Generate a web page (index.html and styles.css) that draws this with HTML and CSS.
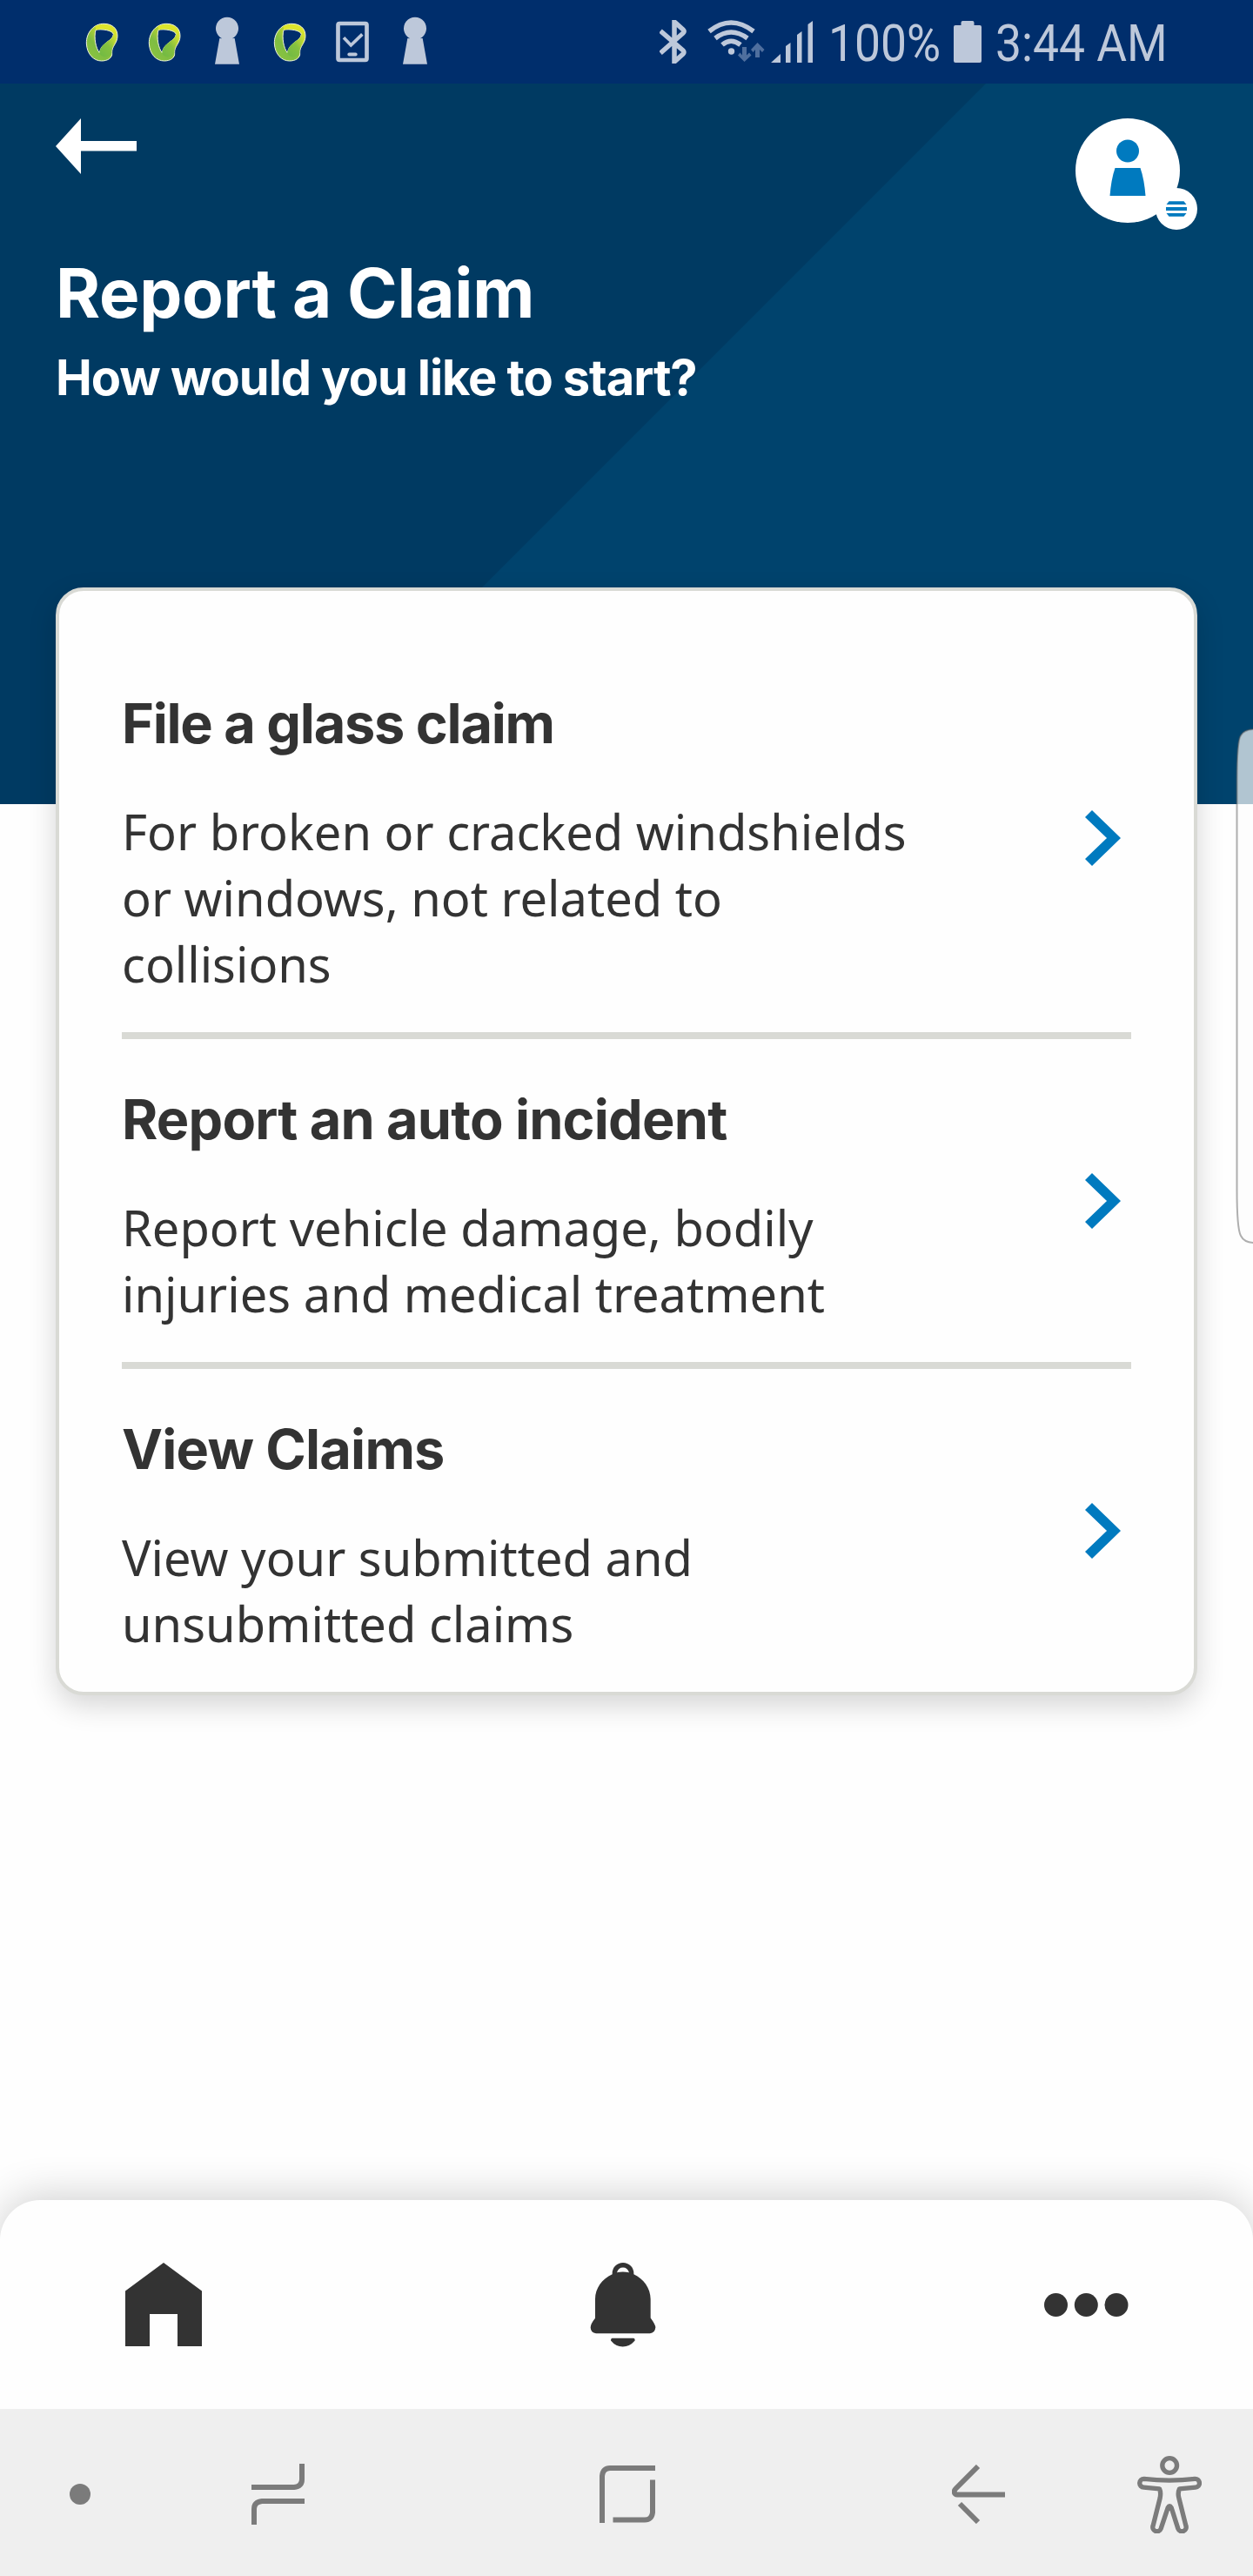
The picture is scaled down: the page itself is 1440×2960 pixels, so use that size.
FILE: index.html
```html
<!DOCTYPE html>
<html lang="en">
<head>
<meta charset="utf-8">
<title>Report a Claim</title>
<link rel="stylesheet" href="styles.css">
</head>
<body>
<svg class="defs" width="0" height="0" aria-hidden="true">
  <defs>
    <linearGradient id="lime" x1="0" y1="1" x2="1" y2="0">
      <stop offset="0" stop-color="#8fc63f"/><stop offset=".35" stop-color="#7fbd42"/><stop offset=".6" stop-color="#b9d432"/><stop offset="1" stop-color="#e9ec2c"/>
    </linearGradient>
    <linearGradient id="leaf" x1="0" y1="1" x2="1" y2="0">
      <stop offset="0" stop-color="#6fb944"/><stop offset=".5" stop-color="#86c13f"/><stop offset="1" stop-color="#dfe62f"/>
    </linearGradient>
    <symbol id="swirl" viewBox="3 0 216 288">
      <path d="M120 82C84 80 57 112 58 150C60 188 84 210 110 210C131 210 148 200 146 182C144 160 165 150 165 124C165 96 145 83 120 82ZM90 103C110 99 148 104 151 118C150 142 108 146 103 182C90 166 83 130 90 103Z" fill="url(#lime)" fill-rule="evenodd" stroke="#f1f5dd" stroke-width="3"/>
      <path d="M163 122C160 142 144 158 145 184C142 200 112 202 103 184C106 146 145 145 152 118Z" fill="url(#leaf)"/>
      <path d="M88 90C110 82 140 82 154 98L150 106C130 98 108 98 92 104Z" fill="#dde52c"/>
    </symbol>
    <symbol id="keyhole" viewBox="435 0 216 288">
      <path d="M526 133A39 39 0 1 1 560 133Q561 131 569 132L585 221H501L517 132Z" fill="#bdc8da"/>
    </symbol>
    <symbol id="chevron" viewBox="0 0 41 64">
      <path d="M8 0L41 32L8 64L0 56L25 32L0 8Z" fill="#007abf"/>
    </symbol>
  </defs>
</svg>

<div class="status">
  <div class="notes">
    <svg><use href="#swirl"/></svg>
    <svg><use href="#swirl"/></svg>
    <svg><use href="#keyhole"/></svg>
    <svg><use href="#swirl"/></svg>
    <svg viewBox="867 0 216 288"><g fill="none" stroke="#bdc8da"><rect x="925.500" y="81" width="99" height="126" rx="5" stroke-width="14"/><path d="M945 130L970 156L1009 118" stroke-width="11"/><path d="M964 187.500H986" stroke-width="12" stroke-linecap="round"/></g></svg>
    <svg><use href="#keyhole"/></svg>
  </div>
  <div class="system">
    <svg class="bt" viewBox="0 0 32 50"><path d="M1 12.500L27 35Q29 37 27 39L17 48V2L27 11Q29 13 27 15L1 38" fill="none" stroke="#bdc8da" stroke-width="5.500"/></svg>
    <svg class="wifi" viewBox="0 0 66 50"><g fill="none" stroke="#bdc8da" stroke-width="5.500"><path d="M2 13Q27 -7 53 13"/><path d="M9 21Q27 7 46 21"/><path d="M17 28.500Q27 20 38 28.500"/></g><circle cx="27.500" cy="36" r="3.700" fill="#bdc8da"/><g fill="#4f6f9e"><path d="M40 31h5v9.500l3-3 2.500 3L42.500 48l-7.500-7.500 2.500-3 2.500 3z"/><path d="M55 43h5v-9l3 3 2.500-3L57.500 26l-7.500 8 2.500 3 2.500-3z"/></g></svg>
    <svg class="signal" viewBox="0 0 48 48"><path d="M0 48L11 38V48ZM17 48V29L22.500 25V48ZM30 48V16L35.500 12V48ZM42.500 48V4L48 0V48Z" fill="#bdc8da"/></svg>
    <span class="pct"><span class="cond">100%</span></span>
    <svg class="battery" viewBox="0 0 32 48"><path d="M8.500 2q0-2 2-2h11q2 0 2 2v3h6.500q2 0 2 2v39q0 2-2 2H2q-2 0-2-2V7q0-2 2-2h6.500z" fill="#bdc8da"/></svg>
    <span class="time"><span class="cond">3:44 AM</span></span>
  </div>
</div>

<header class="hero">
  <div class="bar">
    <svg class="back" viewBox="0 0 93 64"><path d="M0 32L29 0V26H93V37.500H29V64Z" fill="#fff"/></svg>
    <svg class="profile" viewBox="0 0 140 128"><circle cx="60" cy="60" r="60" fill="#fff"/><circle cx="60" cy="37.500" r="13" fill="#007abf"/><path d="M45.500 57H74.500Q79 70 80.500 89H39.500Q41 70 45.500 57Z" fill="#007abf"/><circle cx="116" cy="104" r="24" fill="#fff"/><path d="M107.500 95.300h17l3 3.700h-23zM104 102h24v4h-24zM104.500 109h23l-3 3.700h-17z" fill="#007abf"/></svg>
  </div>
  <h1>Report a Claim</h1>
  <p class="sub">How would you like to start?</p>
</header>

<main class="card">
  <section class="row">
    <div class="copy"><h2 class="tight">File a glass claim</h2><p>For broken or cracked windshields or windows, not related to collisions</p></div>
    <svg class="chev"><use href="#chevron"/></svg>
  </section>
  <section class="row">
    <div class="copy"><h2>Report an auto incident</h2><p>Report vehicle damage, bodily injuries and medical treatment</p></div>
    <svg class="chev"><use href="#chevron"/></svg>
  </section>
  <section class="row">
    <div class="copy"><h2>View Claims</h2><p>View your submitted and unsubmitted claims</p></div>
    <svg class="chev"><use href="#chevron"/></svg>
  </section>
</main>

<svg class="edge" viewBox="0 0 20 592"><path d="M22 1Q10 1 6 8Q1.500 14 1.500 60V530Q1.500 575 6 583Q10 591 22 591Z" fill="rgba(252,252,252,.7)" stroke="rgba(90,90,90,.48)" stroke-width="2"/></svg>

<div class="bottom">
  <nav class="tabs">
    <svg class="home" viewBox="0 0 88 96"><path d="M44 0L88 32.500V96H60V59H28V96H0V32.500Z" fill="#333"/></svg>
    <svg class="bell" viewBox="235 299 228 290"><path d="M312 338V335A36.500 36 0 0 1 386 335V338C420 354 444 386 444 424V489Q461 512 461 522Q459 541 442 542H256Q238 540 237 522Q237 510 253 490V424C253 386 277 354 312 338ZM328 332Q348 328 370 332Q364 315 349 315Q333 315 328 332Z" fill="#333" fill-rule="evenodd"/><path d="M311 559H386Q391 561 390 567Q372 588 348 588Q324 588 307 567Q306 561 311 559Z" fill="#333"/></svg>
    <svg class="more" viewBox="0 0 97 27"><g fill="#333"><circle cx="13.500" cy="13.500" r="13.500"/><circle cx="48.300" cy="13.500" r="13.500"/><circle cx="83" cy="13.500" r="13.500"/></g></svg>
  </nav>
  <nav class="keys">
    <svg class="k-dot" viewBox="0 0 24 24"><circle cx="12" cy="12" r="12" fill="#7b7b7b"/></svg>
    <svg class="k-recent" viewBox="0 0 61 70"><path d="M0 27H49Q58 26 58 18V0M61 43H12Q3 44 3 52V70" fill="none" stroke="#7b7b7b" stroke-width="6"/></svg>
    <svg class="k-home" viewBox="0 0 64 66"><path d="M3 66V12Q4 3 12 3H64M61 16.500V54Q60 62.500 52 62.500H15.500" fill="none" stroke="#7b7b7b" stroke-width="6"/></svg>
    <svg class="k-back" viewBox="0 0 61 68"><path d="M30 2L4.500 27.500C1 31 3 34.500 6 34.500H61M9 45L30 66" fill="none" stroke="#7b7b7b" stroke-width="6"/></svg>
    <svg class="k-access" viewBox="800 965 221 266"><g fill="none" stroke="#7b7b7b" stroke-width="16" stroke-linejoin="round"><circle cx="911" cy="998" r="25"/><path d="M823 1044Q910 1054 998 1044A14 14 0 0 1 1000 1073L945 1078Q938 1092 943 1110L967 1205A14 14 0 0 1 940 1215L917 1143Q911 1132 905 1143L881 1215A14 14 0 0 1 854 1205L878 1110Q882 1090 876 1078L822 1073A14 14 0 0 1 823 1044Z"/></g></svg>
  </nav>
</div>
</body>
</html>
```
FILE: styles.css
```css
* { box-sizing: border-box; }
body {
  margin: 0;
  width: 1440px;
  height: 2960px;
  overflow: hidden;
  position: relative;
  display: flex;
  flex-direction: column;
  background: #fefefe;
  color: #333;
  font-family: "Noto Sans", sans-serif;
}
svg { display: block; flex: none; }
.defs { position: absolute; }

.status {
  height: 96px;
  flex: none;
  display: flex;
  justify-content: space-between;
  background: #002e6c;
  padding: 0 100px 0 81px;
}
.notes { display: flex; }
.notes svg { width: 72px; height: 96px; }
.system { display: flex; align-items: center; }
.bt { width: 32px; height: 50px; margin-right: 23px; }
.wifi { width: 66px; height: 50px; margin-right: 7px; }
.signal { width: 48px; height: 48px; }
.battery { width: 32px; height: 48px; }
.pct, .time {
  font: 400 60px/96px Roboto, sans-serif;
  color: #bdc8da;
  white-space: nowrap;
  display: flex;
}
.pct { width: 162px; padding-left: 18px; padding-top: 3px; }
.time { width: 212px; padding-left: 16px; padding-top: 3px; }
.cond { display: block; transform: scaleX(.89); transform-origin: left; }

.hero {
  height: 828px;
  flex: none;
  padding: 40px 64px 0;
  color: #fff;
  background: #003a62;
  position: relative;
}
.hero::before {
  content: "";
  position: absolute;
  inset: 0;
  background: #00436d;
  clip-path: polygon(1133px 0, 100% 0, 100% 100%, 305px 100%);
}
.bar { display: flex; justify-content: space-between; height: 128px; position: relative; }
.back { width: 93px; height: 64px; }
.profile { width: 140px; height: 128px; }
h1, h2, .sub { margin: 0; font-family: Inter, sans-serif; font-weight: 700; white-space: nowrap; }
h1 { position: relative; font-size: 78px; line-height: 100px; letter-spacing: -.3px; margin-top: 23px; }
.sub { position: relative; font-size: 56px; line-height: 80px; letter-spacing: -1.1px; margin-top: 7px; }

.card {
  width: 1312px;
  margin: -249px auto 0;
  position: relative;
  flex: none;
  background: #fefefe;
  border: 4px solid #d9dad5;
  border-radius: 32px;
  padding: 60px 72px 0;
  box-shadow: 0 12px 32px rgba(0, 0, 0, .16);
}
.row { display: flex; align-items: center; justify-content: space-between; padding-right: 12px; }
.row + .row { border-top: 8px solid #d9dad5; }
.copy { width: 920px; padding: 50px 0 41px; }
h2 { font-size: 63px; line-height: 84px; letter-spacing: -.8px; }
h2.tight { letter-spacing: -1.25px; }
.copy p { margin: 44px 0 0; font-size: 56px; line-height: 76px; }
.chev { width: 41px; height: 64px; }

.edge { position: absolute; left: 1420px; top: 837px; width: 20px; height: 592px; }

.bottom { margin-top: auto; flex: none; }
.tabs {
  height: 240px;
  display: flex;
  align-items: center;
  justify-content: space-between;
  padding: 0 143px 0 144px;
  background: #fefefe;
  border-radius: 46px 46px 0 0;
  box-shadow: 0 -4px 48px rgba(0, 0, 0, .19);
}
.home { width: 88px; height: 96px; }
.bell { width: 76px; height: 97px; }
.more { width: 97px; height: 27px; }
.keys {
  position: relative;
  height: 192px;
  display: flex;
  align-items: center;
  background: #efefef;
}
.keys svg { margin-top: 4px; }
.k-dot { width: 24px; height: 24px; margin-left: 80px; }
.k-recent { width: 61px; height: 70px; margin-left: 185px; }
.k-home { width: 64px; height: 66px; margin-left: 339px; }
.k-back { width: 61px; height: 68px; margin-left: 341px; }
.k-access { width: 74px; height: 89px; margin-left: 152px; }
```
